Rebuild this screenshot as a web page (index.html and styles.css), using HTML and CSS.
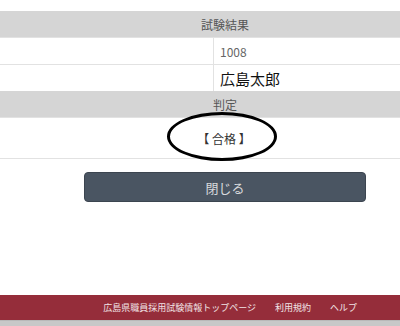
FILE: index.html
```html
<!DOCTYPE html>
<html lang="ja">
<head>
    <meta charset="UTF-8">
    <meta name="viewport" content="width=device-width, initial-scale=1.0">
    <title>試験結果</title>
    <link rel="stylesheet" href="styles.css">
</head>
<body>
    <div class="page">
        <table class="result">
            <tr class="head">
                <th colspan="2">試験結果</th>
            </tr>
            <tr class="row">
                <td class="label"></td>
                <td class="value num">1008</td>
            </tr>
            <tr class="row">
                <td class="label"></td>
                <td class="value name">広島太郎</td>
            </tr>
            <tr class="head">
                <th colspan="2">判定</th>
            </tr>
            <tr class="verdict">
                <td colspan="2">
                    <span class="mark">【 合格 】</span>
                </td>
            </tr>
        </table>

        <div class="actions">
            <button class="btn">閉じる</button>
        </div>
    </div>

    <footer>
        <a href="#">広島県職員採用試験情報トップページ</a>
        <a href="#">利用規約</a>
        <a href="#">ヘルプ</a>
    </footer>
</body>
</html>
```
FILE: styles.css
```css
html, body {
    margin: 0;
    height: 100%;
}

body {
    font-family: "Noto Sans CJK JP", "Noto Sans", sans-serif;
    color: #555;
    background: #fff;
    overflow: hidden;
    display: flex;
    flex-direction: column;
}

.page {
    padding-top: 11px;
    flex: 1;
    overflow: hidden;
}

/* the table is wider than the window, as in the original page */
.result {
    width: 450px;
    border-collapse: collapse;
    font-size: 12px;
}

.result th {
    background-color: #d5d5d5;
    font-weight: normal;
    color: #555;
    height: 26px;
    padding: 0;
    text-align: center;
}

.result td {
    border-top: 1px solid #e2e2e2;
    padding: 0;
}

.result .label {
    width: 213px;
    border-right: 1px solid #e2e2e2;
}

.result .value {
    height: 26px;
    padding-left: 6px;
}

.num {
    color: #666;
}

.name {
    font-size: 15px;
    color: #111;
    padding-top: 1px;
}

.verdict td {
    height: 40px;
    text-align: center;
    border-bottom: 1px solid #e2e2e2;
}

.mark {
    position: relative;
    display: inline-block;
    color: #333;
    font-size: 12px;
    left: -1px;
}

.mark::before {
    content: "";
    position: absolute;
    left: -30px;
    top: -18px;
    width: 104px;
    height: 43px;
    border: 3px solid #000;
    border-radius: 50%;
}

.actions {
    width: 450px;
    padding-top: 13px;
    display: flex;
    justify-content: center;
}

.btn {
    width: 282px;
    height: 30px;
    background-color: #4a5562;
    color: #d8dadd;
    border: 1px solid #3c4550;
    border-radius: 4px;
    font-family: inherit;
    font-size: 13px;
    cursor: pointer;
}

footer {
    height: 25px;
    margin-bottom: 5px;
    background-color: #952d3a;
    border-bottom: 1px solid #b9b9b9;
    box-shadow: 0 5px 0 #c8c8c8;
    display: flex;
    align-items: center;
    justify-content: flex-end;
    gap: 19px;
    padding-right: 43px;
}

footer a {
    color: #f1e4e6;
    text-decoration: none;
    font-size: 9px;
}
```
